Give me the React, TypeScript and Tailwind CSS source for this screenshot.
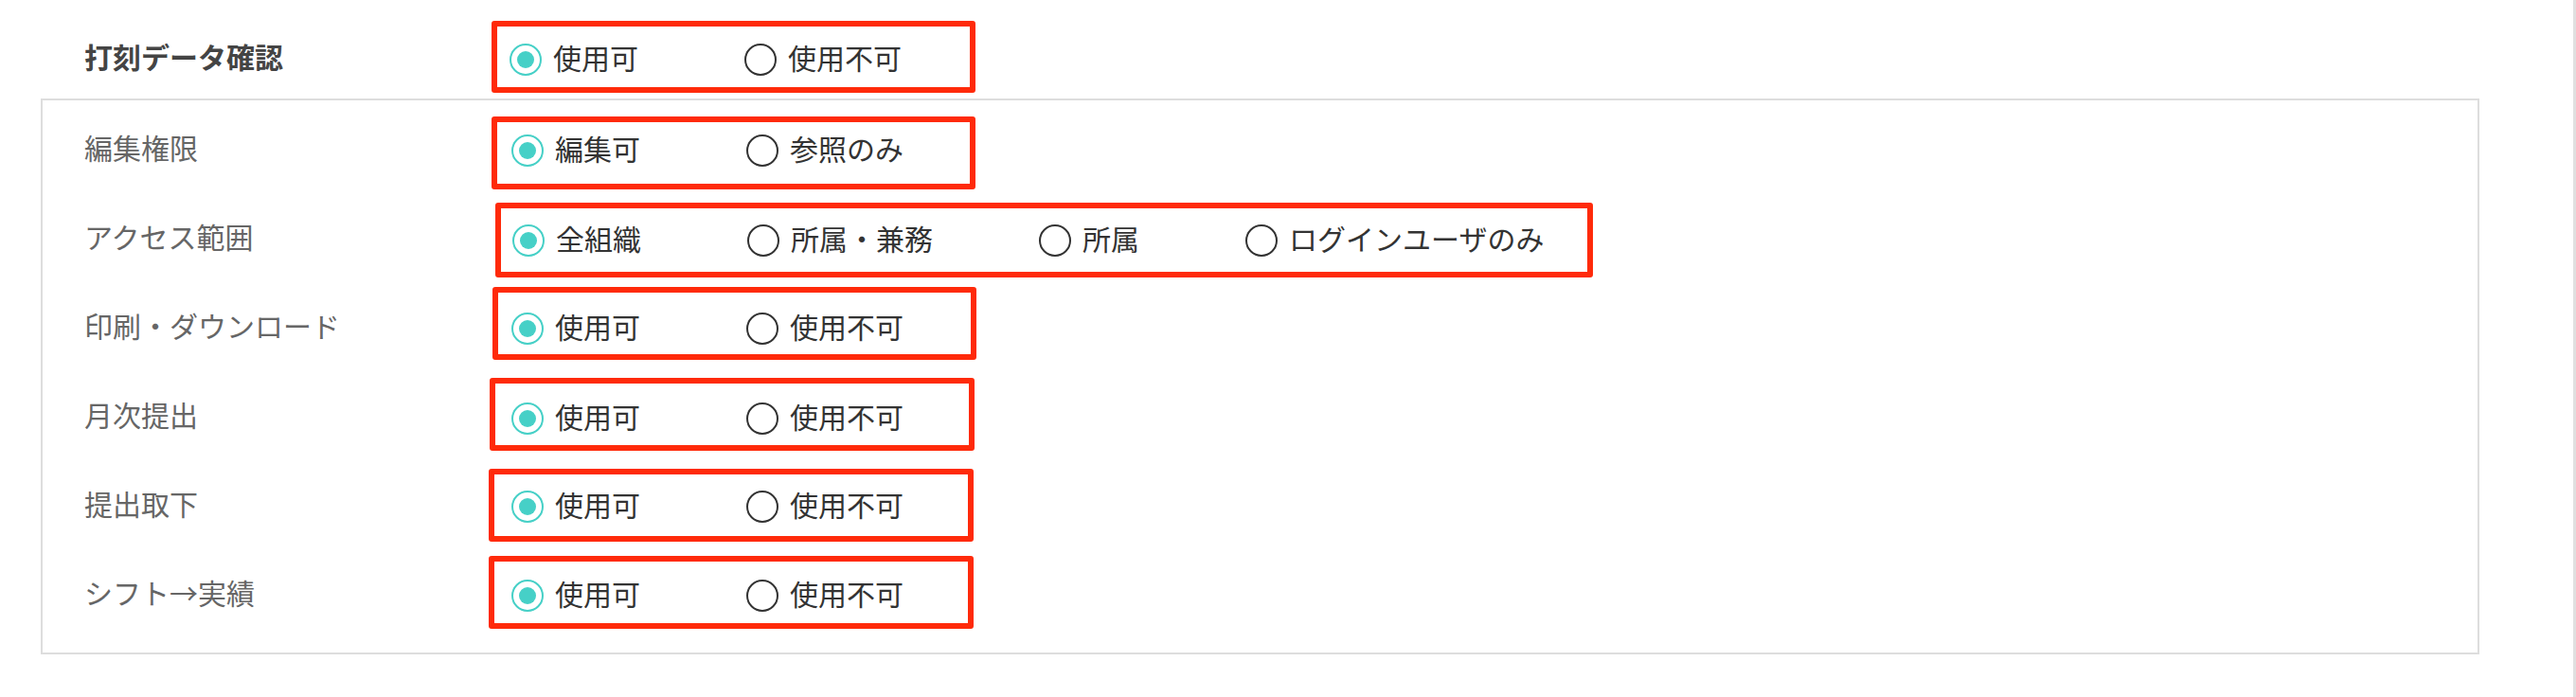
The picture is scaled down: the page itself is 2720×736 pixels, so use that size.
import React from "react";

type Row = {
  label: string;
  options: string[];
  // per-row tweaks so the red annotation boxes sit where they were drawn
  row: string;
  box: string;
};

const rows: Row[] = [
  {
    label: "編集権限",
    options: ["編集可", "参照のみ"],
    row: "h-[94px]",
    box: "mt-[11px] ml-0 w-[511px] h-[77px] pl-[15px] pb-[5px]",
  },
  {
    label: "アクセス範囲",
    options: ["全組織", "所属・兼務", "所属", "ログインユーザのみ"],
    row: "h-[94px]",
    box: "mt-[8px] ml-[4px] w-[1159px] h-[79px] pl-[12px]",
  },
  {
    label: "印刷・ダウンロード",
    options: ["使用可", "使用不可"],
    row: "h-[94px]",
    box: "mt-[3px] ml-[1px] w-[511px] h-[77px] pl-[14px] pt-[11px]",
  },
  {
    label: "月次提出",
    options: ["使用可", "使用不可"],
    row: "h-[94px]",
    box: "mt-[5px] ml-[-2px] w-[512px] h-[77px] pl-[17px] pt-[9px]",
  },
  {
    label: "提出取下",
    options: ["使用可", "使用不可"],
    row: "h-[94px]",
    box: "mt-[7px] ml-[-3px] w-[512px] h-[77px] pl-[18px] pt-[3px]",
  },
  {
    label: "シフト→実績",
    options: ["使用可", "使用不可"],
    row: "h-[94px]",
    box: "mt-[5px] ml-[-3px] w-[512px] h-[77px] pl-[18px] pt-[7px]",
  },
];

function Radio({ checked, label }: { checked: boolean; label: string }) {
  return (
    <label className="flex items-center gap-[12px]">
      {checked ? (
        <span className="flex h-[34px] w-[34px] items-center justify-center rounded-full border-2 border-[#46d0c7]">
          <span className="h-[18px] w-[18px] rounded-full bg-[#46d0c7]" />
        </span>
      ) : (
        <span className="h-[34px] w-[34px] rounded-full border-2 border-[#333333]" />
      )}
      <span className="mb-[6px] text-[30px] leading-none text-[#333333]">{label}</span>
    </label>
  );
}

function RadioGroup({ options, className }: { options: string[]; className: string }) {
  return (
    <div
      className={`flex items-center gap-[112px] rounded-[3px] border-[6px] border-[#ff2a0a] ${className}`}
    >
      {options.map((opt, i) => (
        <Radio key={opt + i} checked={i === 0} label={opt} />
      ))}
    </div>
  );
}

export default function App() {
  return (
    <div
      className="min-h-[736px] w-full border-r-[3px] border-[#e0e0e0] bg-white pl-[43px] pr-[99px] pt-[19px]"
      style={{ fontFamily: '"Noto Sans CJK JP", "Noto Sans", sans-serif' }}
    >
      {/* 打刻データ確認 */}
      <div className="flex h-[85px] items-start pl-[46px]">
        <div className="flex h-full w-[430px] items-center">
          <span className="mb-[6px] text-[30px] font-bold leading-none text-[#444444]">
            打刻データ確認
          </span>
        </div>
        <RadioGroup
          options={["使用可", "使用不可"]}
          className="mt-[3px] w-[511px] h-[76px] pl-[13px] pt-[6px]"
        />
      </div>

      <div className="w-[2575px] border-2 border-[#dddddd] pb-[13px] pl-[44px] pt-[6px]">
        {rows.map((r) => (
          <div key={r.label} className={`flex items-start ${r.row}`}>
            <div className="flex h-full w-[430px] items-center">
              <span className="mb-[8px] text-[30px] leading-none text-[#666666]">{r.label}</span>
            </div>
            <RadioGroup options={r.options} className={r.box} />
          </div>
        ))}
      </div>
    </div>
  );
}
